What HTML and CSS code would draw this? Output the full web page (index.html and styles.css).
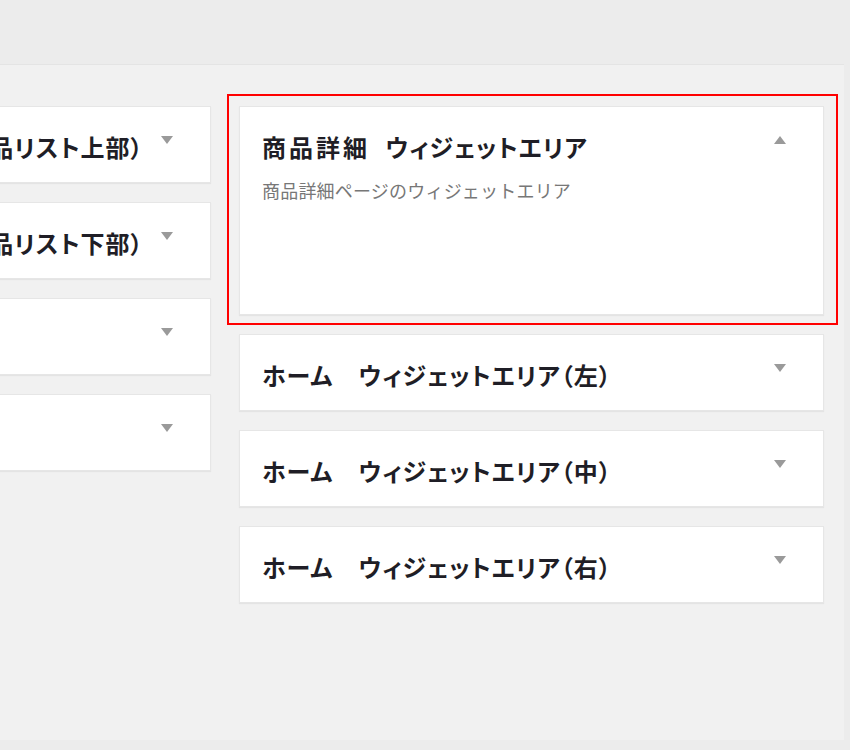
FILE: index.html
```html
<!DOCTYPE html>
<html lang="ja">
<head>
<meta charset="utf-8">
<title>ウィジェットエリア</title>
<link rel="stylesheet" href="styles.css">
</head>
<body>
<div class="panel">
  <div class="columns">
    <div class="col">
      <div class="card">
        <div class="card-head">
          <h3 class="card-title">商品一覧ウィジェットエリア（商品リスト上部）</h3>
          <span class="arrow down"></span>
        </div>
      </div>
      <div class="card">
        <div class="card-head">
          <h3 class="card-title">商品一覧ウィジェットエリア（商品リスト下部）</h3>
          <span class="arrow down"></span>
        </div>
      </div>
      <div class="card">
        <div class="card-head">
          <h3 class="card-title">サイドバー</h3>
          <span class="arrow down"></span>
        </div>
      </div>
      <div class="card">
        <div class="card-head">
          <h3 class="card-title">フッター</h3>
          <span class="arrow down"></span>
        </div>
      </div>
    </div>
    <div class="col">
      <div class="card open highlighted">
        <div class="card-head">
          <h3 class="card-title"><span class="kanji">商品詳細</span> ウィジェットエリア</h3>
          <span class="arrow up"></span>
        </div>
        <p class="card-desc">商品詳細ページのウィジェットエリア</p>
      </div>
      <div class="card">
        <div class="card-head">
          <h3 class="card-title">ホーム　ウィジェットエリア（左）</h3>
          <span class="arrow down"></span>
        </div>
      </div>
      <div class="card">
        <div class="card-head">
          <h3 class="card-title">ホーム　ウィジェットエリア（中）</h3>
          <span class="arrow down"></span>
        </div>
      </div>
      <div class="card">
        <div class="card-head">
          <h3 class="card-title">ホーム　ウィジェットエリア（右）</h3>
          <span class="arrow down"></span>
        </div>
      </div>
    </div>
  </div>
</div>
</body>
</html>
```

FILE: styles.css
```css
html, body {
  margin: 0;
  padding: 0;
}
body {
  background: #ececec;
  width: 850px;
  height: 750px;
  overflow: hidden;
  font-family: "Noto Sans CJK JP", "Noto Sans", sans-serif;
  font-feature-settings: "palt";
}
.panel {
  margin-top: 64px;
  width: 844px;
  height: 676px;
  box-sizing: border-box;
  background: #f1f1f1;
  border-top: 1px solid #e4e4e4;
  padding-top: 41px;
}
.columns {
  display: flex;
  gap: 28px;
  margin-left: -374px;
}
.col {
  width: 585px;
  flex: none;
  display: flex;
  flex-direction: column;
  gap: 19px;
}
.card {
  position: relative;
  box-sizing: border-box;
  height: 77px;
  background: #fff;
  border: 1px solid #e6e6e6;
  box-shadow: 0 1px 1px rgba(0, 0, 0, 0.05);
  padding: 26px 37px 0 22px;
}
.card.open {
  height: 209px;
}
.highlighted::after {
  content: "";
  position: absolute;
  left: -13px;
  top: -13px;
  right: -15px;
  bottom: -11px;
  border: 2px solid #ff0000;
}
.card-head {
  display: flex;
  align-items: flex-start;
  justify-content: space-between;
}
.card-title {
  margin: 0;
  font-size: 24px;
  line-height: 28px;
  font-weight: 700;
  color: #1f1e26;
  letter-spacing: 1px;
  white-space: nowrap;
}
.kanji {
  letter-spacing: 3px;
  margin-right: 9px;
}
.arrow {
  flex: none;
  width: 0;
  height: 0;
  margin-top: 3px;
  border-left: 6px solid transparent;
  border-right: 6px solid transparent;
}
.arrow.down {
  border-top: 8px solid #9a9a9a;
}
.arrow.up {
  border-bottom: 8px solid #9a9a9a;
}
.card-desc {
  margin: 17px 0 0;
  font-size: 18px;
  line-height: 24px;
  font-weight: 400;
  color: #777;
  letter-spacing: 0.2px;
  font-feature-settings: normal;
}
```
